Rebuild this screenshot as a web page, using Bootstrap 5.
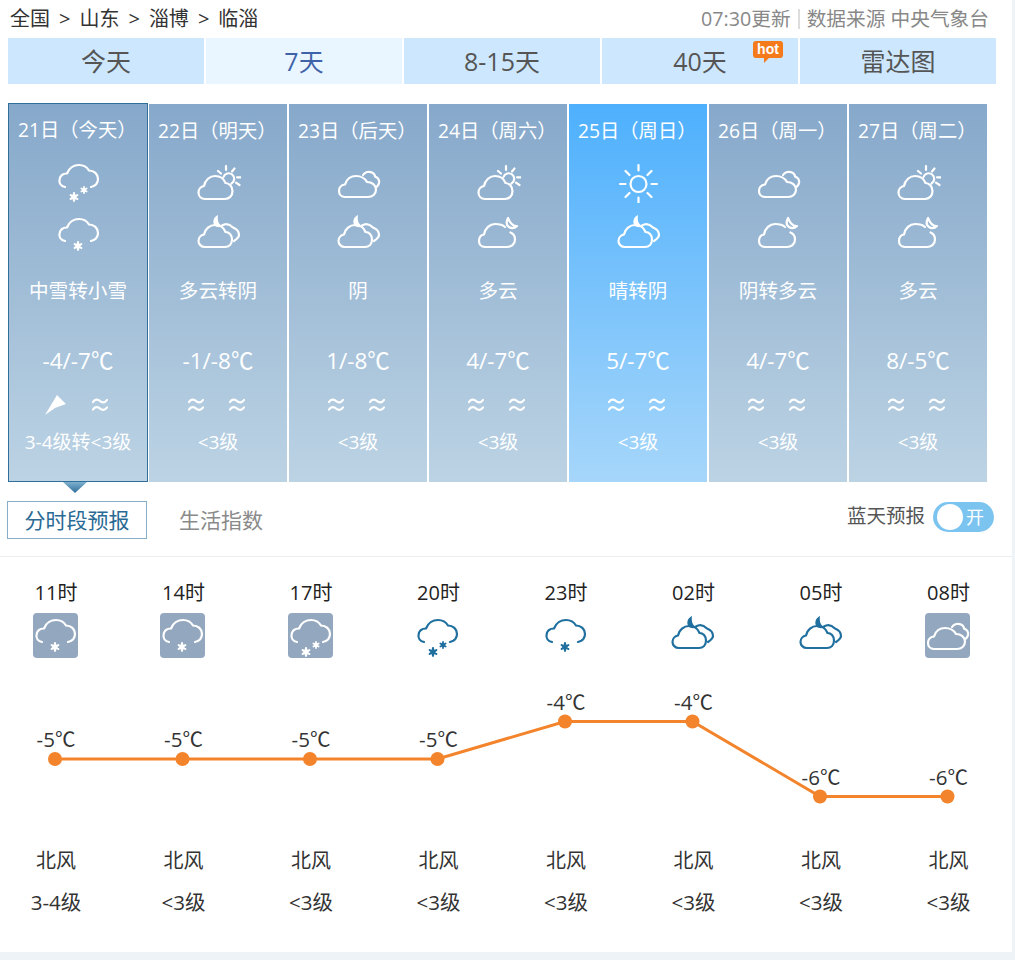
<!DOCTYPE html>
<html lang="zh-CN">
<head>
    <meta charset="UTF-8">
    <meta name="viewport" content="width=device-width, initial-scale=1.0">
    <title>临淄天气预报</title>
    <link href="https://cdn.jsdelivr.net/npm/bootstrap@5.3.0/dist/css/bootstrap.min.css" rel="stylesheet">
    <style>
        body { background: #eef3f7; font-family: "Open Sans", "Noto Sans CJK SC", sans-serif; color: #333; }
        .wx-page { width: 1012px; height: 952px; background: #fff; overflow: hidden; }
        .wx-crumb { height: 38px; padding: 0 23px 0 10px; font-size: 20px; line-height: 38px; color: #333; }
        .wx-crumb b { font-weight: 400; margin: 0 9px; }
        .wx-update { color: #888; font-size: 19.7px; }
        .wx-update i { display: inline-block; width: 2px; height: 20px; margin: 0 7px; background: #ddd; vertical-align: -3px; }
        .wx-tabs { padding-left: 8px; gap: 2px; }
        .wx-tab { position: relative; width: 196px; height: 46px; background: #cde8fe; color: #555; font-size: 25px; line-height: 46px; text-align: center; }
        .wx-tab.active { background: #e9f5ff; color: #3f63a8; }
        .wx-hot { position: absolute; top: 3px; right: 15px; width: 30px; height: 17px; border-radius: 3px; background: #f47a1c; color: #fff; font: 700 14px/16px "Liberation Sans", sans-serif; }
        .wx-hot::after { content: ""; position: absolute; left: 11px; bottom: -5px; border: 3px solid transparent; border-top-color: #f47a1c; border-left-color: #f47a1c; }
        .wx-days { padding: 20px 0 0 9px; gap: 2px; }
        .wx-day { position: relative; width: 138px; height: 378px; background: linear-gradient(#86a8ca, #bcd3e4); color: #fff; text-align: center; }
        .wx-day.sunny { background: linear-gradient(#4eb0fd, #a6d6fa); }
        .wx-day.today { width: 140px; margin: -1px -1px 0 -1px; border: 1px solid #2f6f99; height: 379px; }
        .wx-day.today::after { content: ""; position: absolute; left: 54px; bottom: -12px; width: 24px; height: 11px; background: linear-gradient(#7fb0cf, #2f6f99); clip-path: polygon(0 0, 100% 0, 50% 100%); }
        .wx-date { padding: 15px 0 0 9px; height: 54px; font-size: 19.3px; line-height: 24px; text-align: left; white-space: nowrap; }
        .wx-day.today .wx-date { padding-top: 14px; }
        .wx-icon { display: block; width: 45px; height: 45px; margin: 0 auto; }
        .wx-day .wx-icon { filter: blur(.3px); }
        .wx-day .wx-icon + .wx-icon { margin-top: 9px; }
        .wx-desc { margin-top: 21px; height: 26px; font-size: 19.6px; line-height: 26px; }
        .wx-temp { margin-top: 43px; height: 28px; font-size: 22.5px; line-height: 28px; }
        .wx-winds { margin-top: 19px; height: 22px; gap: 25px; padding-right: 4px; }
        .wx-winds svg { filter: blur(.3px); }
        .wx-level { margin-top: 14px; font-size: 19px; line-height: 24px; }
        .wx-sub { position: relative; height: 75px; padding: 19px 18px 0 7px; border-bottom: 1px solid #eceff2; }
        .wx-sub-on { width: 140px; height: 38px; border: 1px solid #87aec6; color: #2a6a94; font-size: 21px; line-height: 36px; text-align: center; }
        .wx-sub-off { margin-left: 32px; color: #8a8a8a; font-size: 21px; line-height: 38px; }
        .wx-blue { color: #555; font-size: 19.5px; line-height: 30px; margin-right: 8px; }
        .wx-switch { position: relative; width: 61px; height: 30px; margin-top: 1px; border-radius: 15px; background: #7cc4f0; color: #fff; font-size: 18px; line-height: 30px; padding-left: 33px; }
        .wx-switch::before { content: ""; position: absolute; left: 4px; top: 2px; width: 26px; height: 26px; border-radius: 50%; background: #fff; }
        .wx-hours { display: grid; grid-template-columns: repeat(8, 110px); column-gap: 17.5px; text-align: center; }
        .wx-hour { font-size: 20px; line-height: 26px; color: #222; }
        .wx-hour-t { display: block; padding-left: 2px; }
        .wx-hour-row { padding-top: 23px; }
        .wx-tile { width: 45px; height: 45px; margin: 7px auto 0; border-radius: 4px; color: #1f6f9f; }
        .wx-tile.grey { background: #93a8bf; color: #fff; }
        .wx-chart { display: block; width: 1012px; height: 190px; }
        .wx-chart text { font-size: 20.5px; fill: #333; text-anchor: middle; }
        .wx-wind-row { font-size: 20px; color: #333; line-height: 26px; padding-left: 0; }
        .wx-wind-row div { padding-left: 2px; }
        .wx-wind-row + .wx-wind-row { margin-top: 15px; font-size: 20.5px; }
        .wx-stroke { fill: none; stroke: currentColor; stroke-width: 2.2; stroke-linecap: round; stroke-linejoin: round; }
        .wx-fill { fill: currentColor; stroke: none; }
    </style>
</head>
<body>

<!-- icon set, all drawn on a 45x45 box -->
<svg width="0" height="0" class="position-absolute">
    <defs>
        <g id="flake">
            <path d="M0 -3.800V3.800M-3.300 -1.900L3.300 1.900M-3.300 1.900L3.300 -1.900" class="wx-stroke"/>
            <circle r="2.700" class="wx-fill"/>
        </g>
        <path id="cloudOpen" d="M9 29C5 28 3 25 3.500 22C4 18 7 15.500 11 15.500C13 10 18 7 23 7C28 7 31 9 33 12.500C38 12.500 42 16 42 21C42 25 39 28 35 29" class="wx-stroke"/>
        <path id="cloudLow" d="M9 41C5 41 2.500 38 2.500 34.500C2.500 31 5 28.500 8 28C9 22 14 18 19 18C24 18 28 21 29.500 25C33 25 36.500 28.500 36.500 33C36.500 38 33 41 29 41Z" class="wx-stroke"/>
        <path id="cloudHigh" d="M9 35C5 35 2.500 32 2.500 29C2.500 25.500 5 23 8 22.500C9 17 14 13 19 13C24 13 28 16 29.500 20C33 20 36 23 36 27.500C36 32 33 35 29 35Z" class="wx-stroke"/>
        <symbol id="snowS" viewBox="0 0 45 45"><use href="#cloudOpen"/><use href="#flake" transform="translate(22 34)"/></symbol>
        <symbol id="snowM" viewBox="0 0 45 45"><use href="#cloudOpen"/><use href="#flake" transform="translate(18 39)"/><use href="#flake" transform="translate(28 32) scale(.8)"/></symbol>
        <symbol id="overcast" viewBox="0 0 45 45">
            <path d="M9 36C5 36 3 33 3 30C3 26.500 5.500 24 9 23.500C10.500 18 15 15 20 15C25 15 29 17.500 31 21C36 21 40 24 40 28.500C40 33 36.500 36 32 36Z" class="wx-stroke"/>
            <path d="M27 14C29 11 33 10 36 11.500C38 12.500 39 14 39 15.500C41.500 16.500 43.500 19 43 22C42.500 24 41.500 25.500 40 26" class="wx-stroke"/>
        </symbol>
        <symbol id="nightOvercast" viewBox="0 0 45 45">
            <use href="#cloudHigh"/>
            <path d="M26 13.500C30 11 34 12.500 37 15.500C41 17 43 20 43 23C43 25 41 27 38 29" class="wx-stroke"/>
            <path d="M22 3C17 5 16 11 19 14C21 15.500 25 15.500 27 14C23 13 21 9 22 3Z" class="wx-fill"/>
        </symbol>
        <symbol id="nightCloudy" viewBox="0 0 45 45">
            <path d="M29 15C27 13 23 12 19 12C14 12 9 16 8 22.500C5 23 3 25.500 3 29C3 32 5 35 9 35H31C35 35 39 32.500 39 27.500C39 24 37 21.500 34.500 20.500" class="wx-stroke"/>
            <path d="M32 6C30 10 30 13 33 15C36 17 39 16 41 14C37 14.500 34 11 32 6Z" class="wx-stroke"/>
        </symbol>
        <symbol id="dayCloudy" viewBox="0 0 45 45">
            <use href="#cloudLow"/>
            <path d="M27.500 19A5.500 5.500 0 1 1 35.500 25.500" class="wx-stroke"/>
            <path d="M30 8V12M22 13L25 15.500M38.500 10.500L36 13.500M44.700 19.300H41M43.500 27L40 24.700" class="wx-stroke"/>
        </symbol>
        <symbol id="sun" viewBox="0 0 45 45">
            <circle cx="22.500" cy="26" r="8" class="wx-stroke"/>
            <path d="M22.500 7V12.500M22.500 39.500V45M4 26H9.500M35.500 26H41M9.500 13L13.500 17M31.500 35L35.500 39M9.500 39L13.500 35M31.500 17L35.500 13" class="wx-stroke"/>
        </symbol>
        <symbol id="waves" viewBox="0 0 16 16">
            <path d="M1 5C3 2 6 2 8 4S13 6 15 3M1 12.500C3 9.500 6 9.500 8 11.500S13 13.500 15 10.500" class="wx-stroke"/>
        </symbol>
    </defs>
</svg>

<div class="wx-page">
    <!-- Breadcrumb -->
    <div class="wx-crumb d-flex justify-content-between">
        <span>全国<b>&gt;</b>山东<b>&gt;</b>淄博<b>&gt;</b>临淄</span>
        <span class="wx-update">07:30更新<i></i>数据来源 中央气象台</span>
    </div>

    <!-- Range tabs -->
    <div class="wx-tabs d-flex">
        <div class="wx-tab">今天</div>
        <div class="wx-tab active">7天</div>
        <div class="wx-tab">8-15天</div>
        <div class="wx-tab">40天<span class="wx-hot">hot</span></div>
        <div class="wx-tab">雷达图</div>
    </div>

    <!-- 7 day cards -->
    <div id="dayList" class="wx-days d-flex align-items-start"></div>

    <!-- Sub tabs -->
    <div class="wx-sub d-flex align-items-start">
        <div class="wx-sub-on">分时段预报</div>
        <div class="wx-sub-off">生活指数</div>
        <div class="ms-auto d-flex">
            <span class="wx-blue">蓝天预报</span>
            <div class="wx-switch">开</div>
        </div>
    </div>

    <!-- Hourly -->
    <div id="hourIcons" class="wx-hours wx-hour-row"></div>
    <svg class="wx-chart" viewBox="0 0 1012 190" id="tempChart"></svg>
    <div id="windDir" class="wx-hours wx-wind-row"></div>
    <div id="windLevel" class="wx-hours wx-wind-row"></div>
</div>

<script src="https://cdn.jsdelivr.net/npm/bootstrap@5.3.0/dist/js/bootstrap.bundle.min.js"></script>
<script>
const days = [
    { date: '21日（今天）', icons: ['snowM', 'snowS'], desc: '中雪转小雪', temp: '-4/-7℃', level: '3-4级转&lt;3级', arrow: true, cls: 'today' },
    { date: '22日（明天）', icons: ['dayCloudy', 'nightOvercast'], desc: '多云转阴', temp: '-1/-8℃', level: '&lt;3级' },
    { date: '23日（后天）', icons: ['overcastLow', 'nightOvercast'], desc: '阴', temp: '1/-8℃', level: '&lt;3级' },
    { date: '24日（周六）', icons: ['dayCloudy', 'nightCloudy'], desc: '多云', temp: '4/-7℃', level: '&lt;3级' },
    { date: '25日（周日）', icons: ['sun', 'nightOvercast'], desc: '晴转阴', temp: '5/-7℃', level: '&lt;3级', cls: 'sunny' },
    { date: '26日（周一）', icons: ['overcastLow', 'nightCloudy'], desc: '阴转多云', temp: '4/-7℃', level: '&lt;3级' },
    { date: '27日（周二）', icons: ['dayCloudy', 'nightCloudy'], desc: '多云', temp: '8/-5℃', level: '&lt;3级' }
];

const hours = [
    { t: '11时', icon: 'snowS', grey: true, c: -5, dir: '北风', lv: '3-4级' },
    { t: '14时', icon: 'snowS', grey: true, c: -5, dir: '北风', lv: '&lt;3级' },
    { t: '17时', icon: 'snowM', grey: true, c: -5, dir: '北风', lv: '&lt;3级' },
    { t: '20时', icon: 'snowM', c: -5, dir: '北风', lv: '&lt;3级' },
    { t: '23时', icon: 'snowS', c: -4, dir: '北风', lv: '&lt;3级' },
    { t: '02时', icon: 'nightOvercast', c: -4, dir: '北风', lv: '&lt;3级' },
    { t: '05时', icon: 'nightOvercast', c: -6, dir: '北风', lv: '&lt;3级' },
    { t: '08时', icon: 'overcast', grey: true, c: -6, dir: '北风', lv: '&lt;3级' }
];

function icon(name) {
    // the day row draws overcast lower in its box than the hourly tile
    if (name === 'overcastLow') {
        return `<svg class="wx-icon" viewBox="0 -3 45 45"><use href="#overcast" width="45" height="45"/></svg>`;
    }
    return `<svg class="wx-icon"><use href="#${name}" width="45" height="45"/></svg>`;
}

const waves = `<svg width="16" height="16"><use href="#waves"/></svg>`;
const arrow = `<svg width="22" height="20" viewBox="0 0 22 20"><polygon points="12,0 21,9 10,13 0,20" fill="#fff"/></svg>`;

document.getElementById('dayList').innerHTML = days.map(d => `
    <div class="wx-day ${d.cls || ''}">
        <div class="wx-date">${d.date}</div>
        ${d.icons.map(icon).join('')}
        <div class="wx-desc">${d.desc}</div>
        <div class="wx-temp">${d.temp}</div>
        <div class="wx-winds d-flex justify-content-center align-items-center">${d.arrow ? arrow : waves}${waves}</div>
        <div class="wx-level">${d.level}</div>
    </div>
`).join('');

document.getElementById('hourIcons').innerHTML = hours.map(h => `
    <div class="wx-hour"><span class="wx-hour-t">${h.t}</span><div class="wx-tile ${h.grey ? 'grey' : ''}">${icon(h.icon)}</div></div>
`).join('');

document.getElementById('windDir').innerHTML = hours.map(h => `<div>${h.dir}</div>`).join('');
document.getElementById('windLevel').innerHTML = hours.map(h => `<div>${h.lv}</div>`).join('');

// Temperature line
const pts = hours.map((h, i) => ({
    x: 55 + i * 127.5,
    y: 101 + (-5 - h.c) * 37.5,
    c: h.c
}));
document.getElementById('tempChart').innerHTML = `
    <polyline points="${pts.map(p => p.x + ',' + p.y).join(' ')}" fill="none" stroke="#f3842b" stroke-width="3"/>
    ${pts.map(p => `<circle cx="${p.x}" cy="${p.y}" r="7" fill="#f3842b"/>
    <text x="${p.x + 1}" y="${p.y - 12}">${p.c}℃</text>`).join('')}
`;
</script>

</body>
</html>
